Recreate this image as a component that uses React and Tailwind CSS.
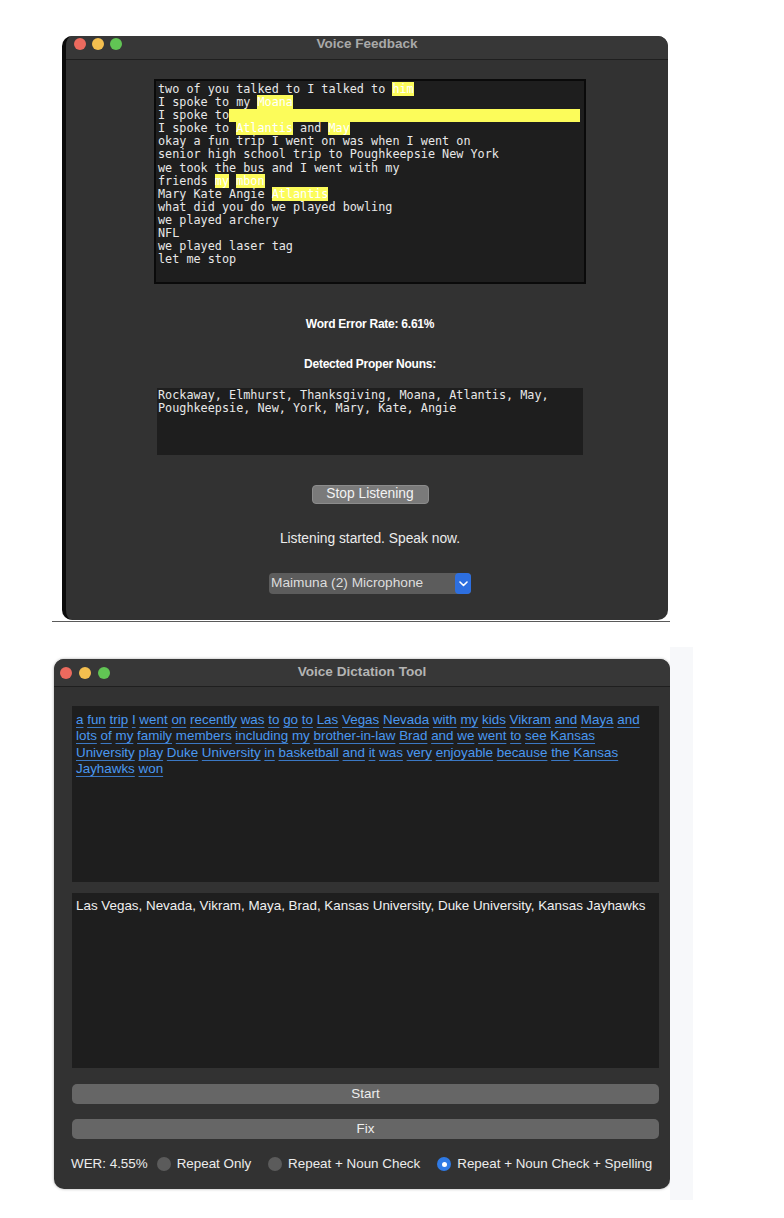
const mono = { fontFamily: '"DejaVu Sans Mono", "Liberation Mono", monospace' };

function Lights({ className }) {
  return (
    <div className={"flex items-center gap-[6px] " + className}>
      <span className="h-[12px] w-[12px] rounded-full bg-[#ec6a5e]" />
      <span className="h-[12px] w-[12px] rounded-full bg-[#f4bf4f]" />
      <span className="h-[12px] w-[12px] rounded-full bg-[#61c554]" />
    </div>
  );
}

function Hl({ children }) {
  return <span className="bg-[#fcfc5a] text-white">{children}</span>;
}

const transcript = [
  <>two of you talked to I talked to <Hl>him</Hl></>,
  <>I spoke to my <Hl>Moana</Hl></>,
  null,
  <>I spoke to <Hl>Atlantis</Hl> and <Hl>May</Hl></>,
  <>okay a fun trip I went on was when I went on</>,
  <>senior high school trip to Poughkeepsie New York</>,
  <>we took the bus and I went with my</>,
  <>friends <Hl>my</Hl> <Hl>mbon</Hl></>,
  <>Mary Kate Angie <Hl>Atlantis</Hl></>,
  <>what did you do we played bowling</>,
  <>we played archery</>,
  <>NFL</>,
  <>we played laser tag</>,
  <>let me stop</>,
];

const dictation =
  "a fun trip I went on recently was to go to Las Vegas Nevada with my kids Vikram and Maya and lots of my family members including my brother-in-law Brad and we went to see Kansas University play Duke University in basketball and it was very enjoyable because the Kansas Jayhawks won";

function Radio({ checked, label }) {
  return (
    <div className="flex items-center gap-[6px]">
      {checked ? (
        <span className="flex h-[14px] w-[14px] items-center justify-center rounded-full bg-[#2f7ae5]">
          <span className="h-[5px] w-[5px] rounded-full bg-white" />
        </span>
      ) : (
        <span className="h-[14px] w-[14px] rounded-full bg-[#5b5b5b]" />
      )}
      <span>{label}</span>
    </div>
  );
}

export default function App() {
  const sans = { fontFamily: '"Liberation Sans", Arial, sans-serif' };
  return (
    <div className="h-[1218px] w-[784px] overflow-hidden bg-white pt-[36px]" style={sans}>
      {/* Voice Feedback window */}
      <div className="ml-[62px] flex h-[584px] w-[606px] flex-col overflow-hidden rounded-[10px] border-l-[4px] border-[#0b0b0b] bg-[#323232]">
        <div className="h-[24px] border-b border-[#1f1f1f] bg-[#373737] pt-[1px]">
          <div className="flex h-[14px] items-center">
            <Lights className="ml-[8px] w-[60px]" />
            <div className="flex-1 text-center text-[13.5px] font-bold text-[#a9a9a9]">Voice Feedback</div>
            <div className="w-[68px]" />
          </div>
        </div>

        <div className="ml-[88px] mt-[19px] flex w-[432px] flex-col items-center">
          <div
            className="h-[205px] w-full border-2 border-[#0a0a0a] bg-[#1e1e1e] px-[2px] pt-[2px] text-[11.8px] leading-[13.1px] text-[#e8e8e8]"
            style={mono}
          >
            {transcript.map((line, i) =>
              line === null ? (
                <div key={i} className="flex whitespace-pre">
                  <span>I spoke to</span>
                  <span className="mr-[2px] flex-1 bg-[#fcfc5a]" />
                </div>
              ) : (
                <div key={i} className="whitespace-pre">{line}</div>
              )
            )}
          </div>

          <div className="mt-[33px] text-[12px] font-bold leading-[15px] tracking-[-0.25px] text-white">
            Word Error Rate: 6.61%
          </div>
          <div className="mt-[25px] text-[12px] font-bold leading-[15px] tracking-[-0.25px] text-white">
            Detected Proper Nouns:
          </div>

          <div
            className="mt-[16px] h-[67px] w-[426px] bg-[#1e1e1e] px-[1px] pt-[1px] text-[11.8px] leading-[13.1px] text-[#e8e8e8]"
            style={mono}
          >
            Rockaway, Elmhurst, Thanksgiving, Moana, Atlantis, May,
            <br />
            Poughkeepsie, New, York, Mary, Kate, Angie
          </div>

          <div className="mt-[30px] flex h-[19px] w-[117px] items-center justify-center rounded-[4px] border border-[#8c8c8c] bg-[#7a7a7a] text-[13.8px] text-[#f2f2f2]">
            Stop Listening
          </div>

          <div className="mt-[27px] text-[13.8px] leading-[16px] text-[#ececec]">Listening started. Speak now.</div>

          <div className="mt-[26px] flex h-[21px] w-[202px] items-center rounded-[4px] bg-[#5c5c5c] pl-[2px]">
            <span className="flex-1 text-[13.7px] text-[#dedede]">Maimuna (2) Microphone</span>
            <span className="flex h-[21px] w-[16px] items-center justify-center rounded-[4px] bg-[#2d6fe0]">
              <svg width="9" height="6" viewBox="0 0 9 6" fill="none">
                <path d="M1 1l3.5 3.5L8 1" stroke="white" strokeWidth="1.6" strokeLinecap="round" strokeLinejoin="round" />
              </svg>
            </span>
          </div>
        </div>
      </div>
      <div className="ml-[52px] mt-px h-px w-[618px] bg-[#5a5a5a]" />

      {/* Voice Dictation Tool window */}
      <div className="ml-[30px] mt-[25px] flex h-[553px] w-[663px]">
        <div className="w-[640px] bg-white pl-[24px] pt-[12px]">
          <div className="flex h-[530px] w-[616px] flex-col overflow-hidden rounded-[10px] bg-[#323232] shadow-[0_0_3px_rgba(0,0,0,0.35)]">
            <div className="flex h-[28px] items-center border-b border-[#1f1f1f] bg-[#373737]">
              <Lights className="ml-[6px] w-[60px] gap-[7px]" />
              <div className="flex-1 text-center text-[13.6px] font-bold text-[#b4b4b4]">Voice Dictation Tool</div>
              <div className="w-[66px]" />
            </div>

            <div className="ml-[18px] mt-[19px] flex w-[587px] flex-col">
              <div className="h-[176px] bg-[#1e1e1e] px-[4px] pt-[6px] text-[13.4px] leading-[16.3px] text-[#4a98f0]">
                {dictation.split(" ").map((w, i) => (
                  <span key={i}>
                    <span className="underline decoration-[#3b78c4] underline-offset-[3px]">{w}</span>{" "}
                  </span>
                ))}
              </div>

              <div className="mt-[11px] h-[175px] bg-[#1e1e1e] px-[4px] pt-[5px] text-[13.4px] leading-[16px] text-[#f0f0f0]">
                Las Vegas, Nevada, Vikram, Maya, Brad, Kansas University, Duke University, Kansas Jayhawks
              </div>

              <div className="mt-[16px] flex h-[20px] items-center justify-center rounded-[5px] bg-[#666666] text-[13.4px] text-[#eeeeee]">
                Start
              </div>
              <div className="mt-[15px] flex h-[20px] items-center justify-center rounded-[5px] bg-[#666666] text-[13.4px] text-[#eeeeee]">
                Fix
              </div>
            </div>

            <div className="ml-[17px] mt-[17px] flex h-[16px] items-center text-[13.4px] leading-[16px] text-[#ececec]">
              <span className="mr-[9px]">WER: 4.55%</span>
              <div className="flex items-center gap-[17px]">
                <Radio label="Repeat Only" />
                <Radio label="Repeat + Noun Check" />
                <Radio checked label="Repeat + Noun Check + Spelling" />
              </div>
            </div>
          </div>
        </div>
        <div className="flex-1 bg-[#f7f8fa]" />
      </div>
      <div className="ml-[48px] -mt-[9px] h-px w-[645px] bg-[#5a5a5a]" />
    </div>
  );
}
